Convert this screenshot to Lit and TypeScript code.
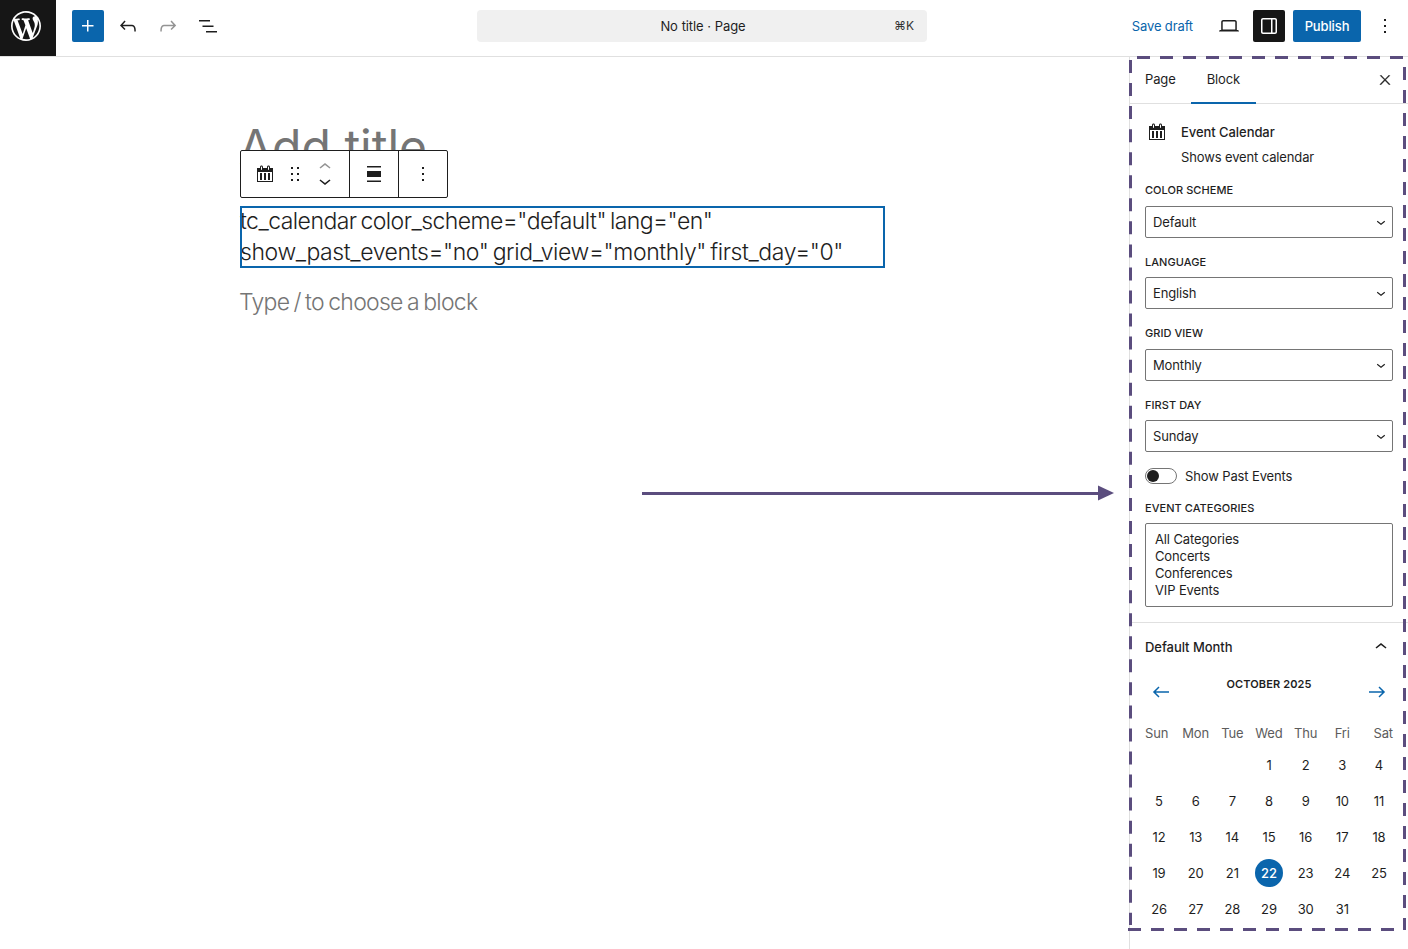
import { LitElement, html, css, svg } from "lit";
import { customElement } from "lit/decorators.js";

const icon = (d: string, size = 24, box = "0 0 24 24") =>
  html`<svg class="ico" width=${size} height=${size} viewBox=${box} fill="currentColor" aria-hidden="true"><path d=${d}></path></svg>`;

const P = {
  wp: "M20 10c0-5.51-4.49-10-10-10C4.48 0 0 4.49 0 10c0 5.52 4.48 10 10 10 5.51 0 10-4.48 10-10zM7.78 15.37L4.37 6.22c.55-.02 1.17-.08 1.17-.08.5-.06.44-1.13-.06-1.11 0 0-1.45.11-2.37.11-.18 0-.37 0-.58-.01C4.12 2.69 6.87 1.11 10 1.11c2.33 0 4.45.87 6.05 2.34-.68-.11-1.65.39-1.65 1.58 0 .74.45 1.36.9 2.1.35.61.55 1.36.55 2.46 0 1.49-1.4 5-1.4 5l-3.03-8.37c.54-.02.82-.17.82-.17.5-.05.44-1.25-.06-1.22 0 0-1.44.12-2.38.12-.87 0-2.33-.12-2.33-.12-.5-.03-.56 1.2-.06 1.22l.92.08 1.26 3.41zM17.41 10c.24-.64.74-1.87.43-4.25.7 1.29 1.05 2.71 1.05 4.25 0 3.29-1.73 6.24-4.4 7.78.97-2.59 1.94-5.2 2.92-7.78zM6.1 18.09C3.12 16.65 1.11 13.53 1.11 10c0-1.3.23-2.48.72-3.59C3.25 10.3 4.67 14.2 6.1 18.09zm4.03-6.63l2.58 6.98c-.86.29-1.76.45-2.71.45-.79 0-1.57-.11-2.29-.33.81-2.38 1.62-4.74 2.42-7.1z",
  plus: "M11 12.5V17.5H12.5V12.5H17.5V11H12.5V6H11V11H6V12.5H11Z",
  undo: "M18.3 11.7c-.6-.6-1.4-.9-2.3-.9H6.7l2.9-3.3-1.1-1-4.5 5L8.5 16l1-1-2.7-2.7H16c.5 0 .9.2 1.3.5 1 1 1 3.4 1 4.5v.3h1.5v-.2c0-1.5 0-4.3-1.5-5.7z",
  redo: "M15.6 6.5l-1.1 1 2.9 3.3H8c-.9 0-1.7.3-2.3.9-1.4 1.5-1.4 4.2-1.4 5.6v.2h1.5v-.3c0-1.1 0-3.5 1-4.5.3-.3.7-.5 1.3-.5h9.2L14.5 15l1.1 1.1 4.6-4.6-4.6-5z",
  list: "M3 6h11v1.5H3V6Zm3.5 5.5h11V13h-11v-1.5ZM21 17H10v1.5h11V17Z",
  desktop: "M20.5 16h-.7V8c0-1.1-.9-2-2-2H6.2c-1.1 0-2 .9-2 2v8h-.7c-.8 0-1.5.7-1.5 1.5h20c0-.8-.7-1.5-1.5-1.5zM5.7 8c0-.3.2-.5.5-.5h11.6c.3 0 .5.2.5.5v7.6H5.7V8z",
  drawer: "M18 4H6c-1.1 0-2 .9-2 2v12c0 1.1.9 2 2 2h12c1.1 0 2-.9 2-2V6c0-1.1-.9-2-2-2zm-4 14.5H6c-.3 0-.5-.2-.5-.5V6c0-.3.2-.5.5-.5h8v13zm4.5-.5c0 .3-.2.5-.5.5h-2.5v-13H18c.3 0 .5.2.5.5v12z",
  more: "M13 19h-2v-2h2v2zm0-6h-2v-2h2v2zm0-6h-2V5h2v2z",
  close: "M13 11.8l6.1-6.3-1-1-6.1 6.2-6.1-6.2-1 1 6.1 6.3-6.5 6.7 1 1 6.5-6.6 6.5 6.6 1-1z",
  drag: "M8 7h2V5H8v2zm0 6h2v-2H8v2zm0 6h2v-2H8v2zm6-14v2h2V5h-2zm0 8h2v-2h-2v2zm0 6h2v-2h-2v2z",
  up: "M6.5 12.4L12 8l5.5 4.4-.9 1.2L12 10l-4.5 3.6-1-1.2z",
  down: "M17.5 11.6L12 16l-5.5-4.4.9-1.2L12 14l4.5-3.6 1 1.2z",
  left: "M20 11.2H6.8l3.7-3.7-1-1L3.9 12l5.6 5.5 1-1-3.7-3.7H20z",
  right: "m14.5 6.5-1 1 3.7 3.7H4v1.6h13.2l-3.7 3.7 1 1 5.6-5.5z",
  full: "M5 4h14v1.5H5V4Zm0 5h14v6H5V9Zm0 9.5h14V20H5v-1.5Z",
  cal: "M15 4h3v14H2V4h3V3c0-.83.67-1.5 1.5-1.5S8 2.17 8 3v1h4V3c0-.83.67-1.5 1.5-1.5S15 2.17 15 3v1zM6 3v2.5c0 .28.22.5.5.5s.5-.22.5-.5V3c0-.28-.22-.5-.5-.5S6 2.72 6 3zm7 0v2.5c0 .28.22.5.5.5s.5-.22.5-.5V3c0-.28-.22-.5-.5-.5s-.5.22-.5.5zm4 14V8H3v9h14zM7 16V9H5v7h2zm4 0V9H9v7h2zm4 0V9h-2v7h2z",
};

const FIELDS = [
  ["COLOR SCHEME", "Default"],
  ["LANGUAGE", "English"],
  ["GRID VIEW", "Monthly"],
  ["FIRST DAY", "Sunday"],
];
const WEEK = ["Sun", "Mon", "Tue", "Wed", "Thu", "Fri", "Sat"];
const CATS = ["All Categories", "Concerts", "Conferences", "VIP Events"];
const DAYS: (number | null)[] = [null, null, null, ...Array.from({ length: 31 }, (_, i) => i + 1), null];

@customElement("app-root")
export class AppRoot extends LitElement {
  static styles = css`
    :host {
      display: block;
      position: relative;
      height: 100vh;
      overflow: hidden;
      background: #fff;
      color: #1e1e1e;
      font: 13px/20px Inter, "Liberation Sans", sans-serif;
      letter-spacing: -0.13px;
    }
    .ico { display: block; flex: none; }
    .top {
      display: flex;
      height: 57px;
      box-sizing: border-box;
      border-bottom: 1px solid #e0e0e0;
      align-items: flex-start;
    }
    .top-left { width: 477px; display: flex; align-items: center; flex: none; height: 52px; }
    .logo {
      width: 56px; height: 56px; background: #161616; color: #fff;
      display: flex; align-items: center; justify-content: center;
      margin: 0 16px 0 0; padding: 0 4px 4px 0; box-sizing: border-box; align-self: flex-start;
    }
    .sq {
      width: 32px; height: 32px; border-radius: 2px;
      display: flex; align-items: center; justify-content: center; flex: none;
    }
    .blue { background: #0a65ac; color: #fff; }
    .dark { background: #161616; color: #fff; }
    .tool { width: 40px; height: 32px; display: flex; align-items: center; justify-content: center; }
    .tool.first { margin-left: 4px; }
    .tool.off { color: #949494; }
    .cmd {
      width: 450px; height: 32px; box-sizing: border-box; flex: none; margin-top: 10px;
      background: #f0f0f0; border-radius: 4px;
      display: flex; align-items: center; justify-content: center;
      padding: 0 13px;
    }
    .cmd-title { flex: 1; text-align: center; padding-left: 22px; word-spacing: 0.4px; }
    .cmd-key { font-size: 12px; color: #333; letter-spacing: 0; }
    .top-right { flex: 1; height: 52px; display: flex; align-items: center; justify-content: flex-end; gap: 8px; padding-right: 7px; }
    .save { color: #0a65ac; margin-right: 12px; }
    .publish {
      width: 68px; height: 32px; background: #0a65ac; color: #fff; border-radius: 2px;
      display: flex; align-items: center; justify-content: center; font-weight: 500;
    }
    .main { display: flex; height: 892px; }
    .canvas { flex: 1; padding: 0 0 0 240px; min-width: 0; }
    .title {
      margin: 66px 0 0 -1px;
      font-size: 48px; line-height: 48px; font-weight: 400; color: #757575;
      letter-spacing: 0;
      height: 83px;
    }
    .para {
      width: 645px;
      font-size: 23px; line-height: 31px; letter-spacing: -0.4px; word-spacing: -2px;
      outline: 2px solid #0a65ac; outline-offset: -2px;
      font-weight: 300;
    }
    .para::first-line { letter-spacing: -0.55px; }
    .hint {
      font-size: 23px; line-height: 31px; letter-spacing: -0.72px; word-spacing: -1.5px; color: #757575;
      margin: 19px 0 0 -1px;
      font-weight: 300;
    }
    .blocktb {
      position: absolute; left: 240px; top: 150px; width: 208px; height: 48px;
      box-sizing: border-box; background: #fff; border: 1px solid #1e1e1e; border-radius: 2px;
      display: flex;
    }
    .tb-group { display: flex; align-items: center; border-right: 1px solid #1e1e1e; height: 100%; box-sizing: border-box; }
    .tb-group:last-child { border-right: 0; }
    .g1 { width: 109px; padding-left: 14px; box-sizing: border-box; }
    .g2 { width: 49px; justify-content: center; }
    .g3 { width: 48px; justify-content: center; }
    .tb-drag { margin-left: 8px; width: 24px; }
    .movers { margin-left: 6px; display: flex; flex-direction: column; height: 28px; justify-content: space-between; color: #1e1e1e; }
    .mover { height: 14px; display: flex; align-items: center; }
    .mover.off { color: #949494; }
    .side {
      width: 279px; flex: none; box-sizing: border-box; border-left: 1px solid #e0e0e0;
      height: 100%; overflow: hidden;
    }
    .tabs { height: 47px; box-sizing: border-box; border-bottom: 1px solid #e0e0e0; display: flex; align-items: stretch; margin-left: -1px; }
    .tab { padding: 0 16px 1px; display: flex; align-items: center; margin-bottom: -1px; box-sizing: border-box; border-bottom: 2px solid transparent; }
    .tab:first-child { margin-right: -1px; }
    .tab.on { border-bottom-color: #0a65ac; }
    .tab-close { margin-left: auto; margin-right: 15px; align-self: center; stroke: currentColor; stroke-width: 0.6; }
    .panel { padding: 18px 15px 15px; border-bottom: 1px solid #e0e0e0; }
    .card { display: grid; grid-template-columns: 36px 1fr; margin-bottom: 15px; }
    .card-ico { padding-left: 2px; }
    .card-title { font-weight: 500; letter-spacing: -0.06px; }
    .card-desc { margin-top: 5px; }
    .label { font-size: 11px; line-height: 16px; font-weight: 500; letter-spacing: 0.05px; }
    .sel {
      margin: 7.5px 0 16px; height: 32px; box-sizing: border-box; border: 1px solid #757575; border-radius: 2px;
      display: flex; align-items: center; justify-content: space-between; padding: 0 2px 0 7px;
    }
    .toggle-row { display: flex; align-items: center; gap: 8px; height: 16px; margin-bottom: 16px; }
    .toggle { width: 32px; height: 16px; box-sizing: border-box; border: 1px solid #757575; border-radius: 8px; padding: 1px; }
    .knob { width: 12px; height: 12px; border-radius: 50%; background: #1e1e1e; }
    .listbox {
      margin-top: 7px; height: 84px; box-sizing: border-box; border: 1px solid #757575; border-radius: 2px;
      padding: 7px 9px; line-height: 17px;
    }
    .acc { padding: 0 15px; }
    .acc-head { height: 48px; display: flex; align-items: center; justify-content: space-between; font-weight: 500; letter-spacing: -0.05px; }
    .nav { display: flex; justify-content: space-between; height: 32px; margin-top: 5px; align-items: center; }
    .nav-btn { padding: 0 4px; color: #0a65ac; }
    .month { align-self: flex-start; font-size: 11px; line-height: 16px; font-weight: 600; letter-spacing: 0.12px; }
    .week { display: grid; grid-template-columns: repeat(7, 28px); justify-content: space-between; line-height: 16px; margin-top: 17px; color: #5c5c5c; }
    .wd { display: flex; justify-content: center; white-space: nowrap; }
    .wd:first-child { justify-content: flex-start; }
    .wd:last-child { justify-content: flex-end; }
    .grid { display: grid; grid-template-columns: repeat(7, 28px); justify-content: space-between; row-gap: 8px; margin-top: 10px; }
    .day { height: 28px; display: flex; align-items: center; justify-content: center; border-radius: 50%; }
    .day.sel-day { background: #0a65ac; color: #fff; font-weight: 500; }
    .overlay { position: absolute; left: 0; top: 0; pointer-events: none; }
  `;

  render() {
    return html`
      <header class="top">
        <div class="top-left">
          <div class="logo">${icon(P.wp, 30, "0 0 20 20")}</div>
          <div class="sq blue">${icon(P.plus)}</div>
          <div class="tool first">${icon(P.undo)}</div>
          <div class="tool off">${icon(P.redo)}</div>
          <div class="tool">${icon(P.list)}</div>
        </div>
        <div class="cmd">
          <span class="cmd-title">No title · Page</span>
          <span class="cmd-key">⌘K</span>
        </div>
        <div class="top-right">
          <span class="save">Save draft</span>
          <div class="sq">${icon(P.desktop)}</div>
          <div class="sq dark">${icon(P.drawer)}</div>
          <div class="publish">Publish</div>
          <div class="sq">${icon(P.more)}</div>
        </div>
      </header>
      <div class="main">
        <main class="canvas">
          <h1 class="title">Add title</h1>
          <div class="para">tc_calendar color_scheme="default" lang="en" show_past_events="no" grid_view="monthly" first_day="0"</div>
          <div class="hint">Type / to choose a block</div>
        </main>
        <aside class="side">
          <div class="tabs">
            <div class="tab">Page</div>
            <div class="tab on">Block</div>
            <div class="tab-close">${icon(P.close, 16)}</div>
          </div>
          <section class="panel">
            <div class="card">
              <div class="card-ico">${icon(P.cal, 20, "0 0 20 20")}</div>
              <div>
                <div class="card-title">Event Calendar</div>
                <div class="card-desc">Shows event calendar</div>
              </div>
            </div>
            ${FIELDS.map(
              ([l, v]) => html`<div class="label">${l}</div>
                <div class="sel"><span>${v}</span>${icon(P.down, 18)}</div>`
            )}
            <div class="toggle-row">
              <div class="toggle"><div class="knob"></div></div>
              <span>Show Past Events</span>
            </div>
            <div class="label">EVENT CATEGORIES</div>
            <div class="listbox">${CATS.map((c) => html`<div>${c}</div>`)}</div>
          </section>
          <section class="acc">
            <div class="acc-head"><span>Default Month</span>${icon(P.up, 24)}</div>
            <div class="nav">
              <div class="nav-btn">${icon(P.left)}</div>
              <div class="month">OCTOBER 2025</div>
              <div class="nav-btn">${icon(P.right)}</div>
            </div>
            <div class="week">${WEEK.map((w) => html`<span class="wd">${w}</span>`)}</div>
            <div class="grid">
              ${DAYS.map((d) => html`<div class="day ${d === 22 ? "sel-day" : ""}">${d ?? ""}</div>`)}
            </div>
          </section>
        </aside>
      </div>
      <div class="blocktb">
        <div class="tb-group g1">
          ${icon(P.cal, 20, "0 0 20 20")}
          <div class="tb-drag">${icon(P.drag)}</div>
          <div class="movers">
            <div class="mover off">${icon(P.up)}</div>
            <div class="mover">${icon(P.down)}</div>
          </div>
        </div>
        <div class="tb-group g2">${icon(P.full)}</div>
        <div class="tb-group g3">${icon(P.more)}</div>
      </div>
      <svg class="overlay" width="1408" height="949" fill="none" aria-hidden="true">
        ${svg`
          <path d="M642 493.5H1100" stroke="#5b4d7e" stroke-width="3"></path>
          <path d="M1098 485.5L1114 493L1098 500.5Z" fill="#5b4d7e"></path>
          <g stroke="#5b4d7e" stroke-width="3">
            <path d="M1137 57.5H1405" stroke-dasharray="13 10"></path>
            <path d="M1128 929.5H1394" stroke-dasharray="13 10"></path>
            <path d="M1130.5 60V925" stroke-dasharray="13 10.05"></path>
            <path d="M1404.5 67V930" stroke-dasharray="13 10"></path>
          </g>
        `}
      </svg>
    `;
  }
}
